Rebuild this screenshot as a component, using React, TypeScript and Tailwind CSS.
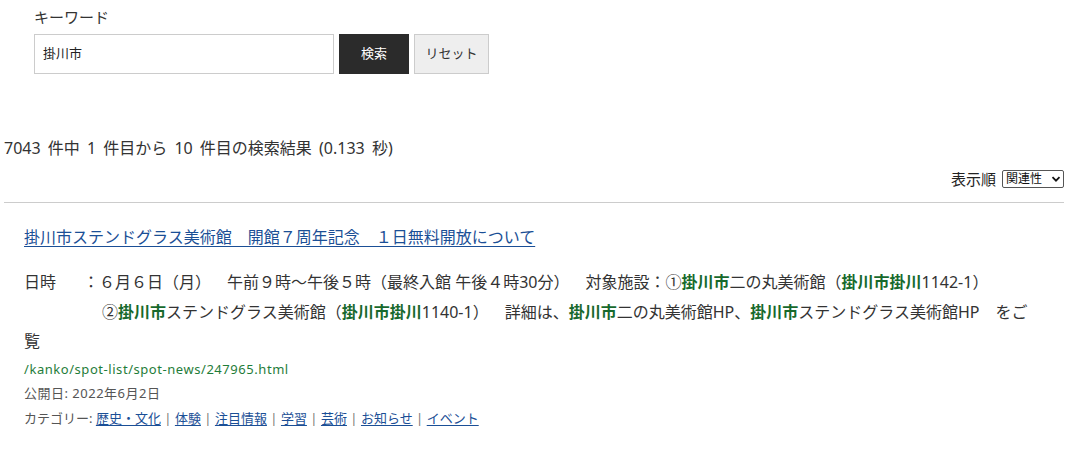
import React from "react";

const G = ({ children }: { children: React.ReactNode }) => (
  <span className="font-bold text-[#17692c]">{children}</span>
);

const cats = ["歴史・文化", "体験", "注目情報", "学習", "芸術", "お知らせ", "イベント"];

export default function App() {
  return (
    <div className="w-[1076px] h-[456px] overflow-hidden bg-white text-[#333] [text-spacing-trim:space-all] font-['Noto_Sans','Noto_Sans_CJK_JP',sans-serif]">
      <div className="pl-[34px] pt-[7px]">
        <div className="text-[15px] leading-[20px]">キーワード</div>
        <div className="mt-[7px] flex gap-[5px]">
          <div className="w-[300px] h-[40px] border border-[#ccc] px-[8px] flex items-center text-[13px] text-[#222]">
            掛川市
          </div>
          <button className="w-[70px] h-[40px] bg-[#2b2b2b] text-white text-[13px]">検索</button>
          <button className="w-[75px] h-[40px] bg-[#eee] border border-[#ccc] text-[13px] text-[#333]">
            リセット
          </button>
        </div>
      </div>

      <div className="mx-[4px] w-[1060px]">
        <div className="mt-[63px] text-[16px] leading-[22px] [word-spacing:3px]">
          7043 件中 1 件目から 10 件目の検索結果 (0.133 秒)
        </div>
        <div className="mt-[11px] flex justify-end items-center gap-[6px] h-[18px]">
          <span className="text-[15px] leading-[18px] text-[#222]">表示順</span>
          <div className="w-[62px] h-[18px] border border-[#555] rounded-[2px] flex items-center pl-[3px] pr-[2px] justify-between text-[12px] leading-[16px] text-[#111]">
            <span>関連性</span>
            <svg width="10" height="8" viewBox="0 0 10 8">
              <path d="M1.5 2.2 L5 5.7 L8.5 2.2" stroke="#111" strokeWidth="1.8" fill="none" />
            </svg>
          </div>
        </div>
        <div className="mt-[14px] border-t border-[#ccc]" />

        <div className="pl-[20px]">
          <div className="mt-[23px] text-[16px] leading-[22px]">
            <a href="#" className="text-[#1b4f96] underline underline-offset-[3px]">
              掛川市ステンドグラス美術館　開館７周年記念　１日無料開放について
            </a>
          </div>
          <div className="mt-[20px] text-[16px] leading-[29.5px] text-[#333] whitespace-nowrap">
            <div>
              <span className="inline-block w-[59px]">日時</span>
              <span className="inline-block w-[16px]">：</span>６月６日（月）　午前９時〜午後５時（最終入館 午後４時30分）　対象施設：①
              <G>掛川市</G>二の丸美術館（<G>掛川市掛川</G>1142-1）
            </div>
            <div className="pl-[78px]">
              ②<G>掛川市</G>ステンドグラス美術館（<G>掛川市掛川</G>1140-1）　詳細は、<G>掛川市</G>
              二の丸美術館HP、<G>掛川市</G>ステンドグラス美術館HP　をご
            </div>
            <div>覧</div>
          </div>
          <div className="text-[13px] leading-[24.5px]">
            <div className="text-[#1f7d3a] tracking-[0.55px]">/kanko/spot-list/spot-news/247965.html</div>
            <div className="text-[#555] tracking-[0.5px]">公開日: 2022年6月2日</div>
            <div className="text-[#555]">
              カテゴリー:{" "}
              {cats.map((c, i) => (
                <React.Fragment key={c}>
                  {i > 0 && <span className="inline-block w-[14px] text-center text-[#777]">|</span>}
                  <a href="#" className="text-[#1b4f96] underline underline-offset-[2px]">
                    {c}
                  </a>
                </React.Fragment>
              ))}
            </div>
          </div>
        </div>
      </div>
    </div>
  );
}
